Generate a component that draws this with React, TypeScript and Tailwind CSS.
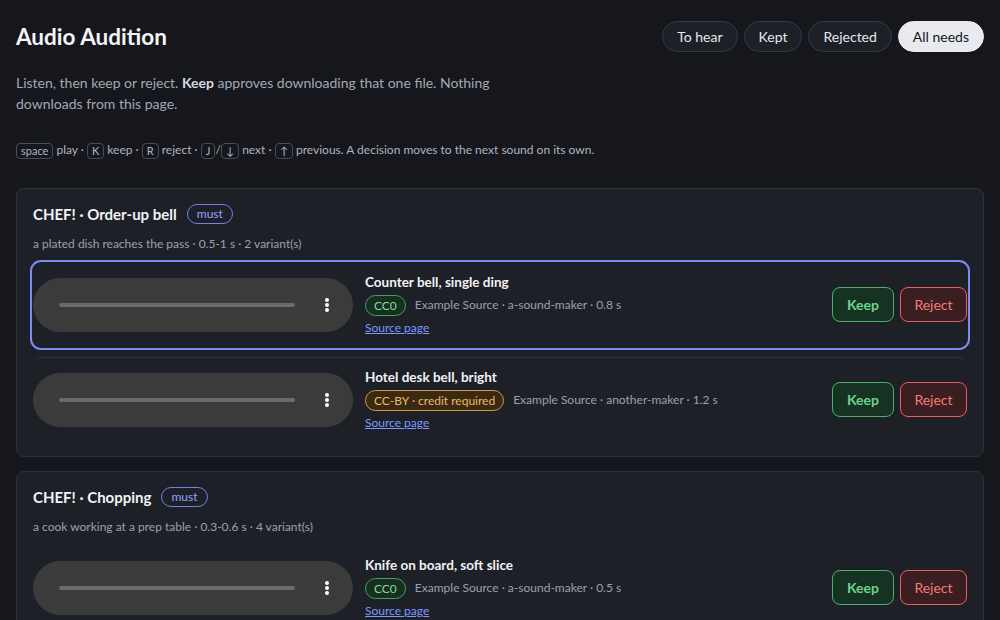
import React from "react";

type Variant = {
  title: string;
  license: "CC0" | "CC-BY";
  meta: string;
};

type Need = {
  title: string;
  desc: string;
  variants: Variant[];
};

const needs: Need[] = [
  {
    title: "CHEF! · Order-up bell",
    desc: "a plated dish reaches the pass · 0.5-1 s · 2 variant(s)",
    variants: [
      { title: "Counter bell, single ding", license: "CC0", meta: "Example Source · a-sound-maker · 0.8 s" },
      { title: "Hotel desk bell, bright", license: "CC-BY", meta: "Example Source · another-maker · 1.2 s" },
    ],
  },
  {
    title: "CHEF! · Chopping",
    desc: "a cook working at a prep table · 0.3-0.6 s · 4 variant(s)",
    variants: [
      { title: "Knife on board, soft slice", license: "CC0", meta: "Example Source · a-sound-maker · 0.5 s" },
      { title: "Cleaver chop, heavy", license: "CC0", meta: "Example Source · a-sound-maker · 0.4 s" },
    ],
  },
];

const filters = ["To hear", "Kept", "Rejected", "All needs"];

function Kbd({ children }: { children: React.ReactNode }) {
  return (
    <kbd className="inline-block rounded-[4px] border border-[#474c57] px-[4px] align-middle text-[11px] leading-[14px] text-[#aeb4bf] font-[inherit]">
      {children}
    </kbd>
  );
}

function Player() {
  return (
    <div className="flex h-[54px] w-[320px] shrink-0 items-center rounded-full bg-[#3b3b3b] pl-[26px] pr-[24px]">
      <div className="h-[4px] w-[236px] rounded-full bg-[#6b6b6b]" />
      <div className="ml-auto flex flex-col items-center gap-[1px]">
        <span className="h-[4px] w-[4px] rounded-full bg-white" />
        <span className="h-[4px] w-[4px] rounded-full bg-white" />
        <span className="h-[4px] w-[4px] rounded-full bg-white" />
      </div>
    </div>
  );
}

function VariantRow({ v, selected, first }: { v: Variant; selected: boolean; first: boolean }) {
  return (
    <div
      className={`flex items-center gap-3 rounded-lg py-[10px] ${first ? "" : "border-t border-[#30333b]"} ${
        selected ? "outline-2 outline-offset-1 outline-[#7c8df2]" : ""
      }`}
    >
      <Player />
      <div className="flex min-w-0 flex-1 flex-col">
        <div className="text-[13.5px] font-bold leading-[18px] text-[#f1f2f4]">{v.title}</div>
        <div className="mt-[4px] flex items-center gap-[9px]">
          {v.license === "CC0" ? (
            <span className="rounded-full border border-[#4a9e66] bg-[#15301f] px-[8px] text-[12px] leading-[19px] text-[#86d69f]">
              CC0
            </span>
          ) : (
            <span className="rounded-full border border-[#d39a45] bg-[#3a2a14] px-[8px] text-[12px] leading-[19px] text-[#f0b860]">
              CC-BY · credit required
            </span>
          )}
          <span className="text-[12px] text-[#9aa0ab]">{v.meta}</span>
        </div>
        <a href="#" className="mt-[3px] w-fit text-[12px] leading-[18px] text-[#7f97ff] underline">
          Source page
        </a>
      </div>
      <div className="flex items-center gap-[6px]">
        <button className="h-[35px] w-[62px] rounded-lg border border-[#4fae6e] bg-[#163222] text-[14px] font-bold text-[#70d28e]">
          Keep
        </button>
        <button className="h-[35px] w-[67px] rounded-lg border border-[#e6625c] bg-[#3b1e21] text-[14px] text-[#f27d72]">
          Reject
        </button>
      </div>
    </div>
  );
}

function NeedCard({ need, index }: { need: Need; index: number }) {
  return (
    <section className="rounded-lg border border-[#2f323a] bg-[#1e2028] px-4 pt-[15px] pb-[14px]">
      <div className="flex items-center gap-[10px]">
        <h2 className="text-[15px] font-bold leading-[20px] text-[#f1f2f4]">{need.title}</h2>
        <span className="rounded-full border border-[#6f82e6] px-[9px] text-[12px] leading-[18px] text-[#93a4ff]">
          must
        </span>
      </div>
      <p className="mt-[12px] text-[12px] leading-[16px] text-[#9aa0ab]">{need.desc}</p>
      <div className="mt-[11px] flex flex-col gap-[10px]">
        {need.variants.map((v, i) => (
          <VariantRow key={v.title} v={v} first={i === 0} selected={index === 0 && i === 0} />
        ))}
      </div>
    </section>
  );
}

export default function App() {
  return (
    <div
      className="h-[620px] overflow-hidden bg-[#16171d] px-4 pt-[21px] text-[#e5e7eb]"
      style={{ fontFamily: 'Lato, "Noto Sans", sans-serif' }}
    >
      <header className="flex items-center justify-between">
        <h1 className="text-[22.5px] font-bold leading-[31px] text-[#f3f4f6]">Audio Audition</h1>
        <nav className="flex items-center gap-[6px]">
          {filters.map((f) => (
            <button
              key={f}
              className={`h-[31px] rounded-full border px-[14px] text-[14px] ${
                f === "All needs"
                  ? "border-[#e8eaf0] bg-[#e8eaf0] text-[#16171d]"
                  : "border-[#373a42] bg-[#1d2027] text-[#e5e7eb]"
              }`}
            >
              {f}
            </button>
          ))}
        </nav>
      </header>

      <p className="mt-[20px] max-w-[505px] text-[14px] leading-[21px] text-[#a3a8b2]">
        Listen, then keep or reject. <b className="text-[#d5d8de]">Keep</b> approves downloading that one file. Nothing
        downloads from this page.
      </p>

      <p className="mt-[28px] text-[12px] leading-[16px] text-[#aeb4bf]">
        <Kbd>space</Kbd> play · <Kbd>K</Kbd> keep · <Kbd>R</Kbd> reject · <Kbd>J</Kbd>/<Kbd>↓</Kbd> next ·{" "}
        <Kbd>↑</Kbd> previous. A decision moves to the next sound on its own.
      </p>

      <main className="mt-[29px] flex flex-col gap-[14px]">
        {needs.map((n, i) => (
          <NeedCard key={n.title} need={n} index={i} />
        ))}
      </main>
    </div>
  );
}
